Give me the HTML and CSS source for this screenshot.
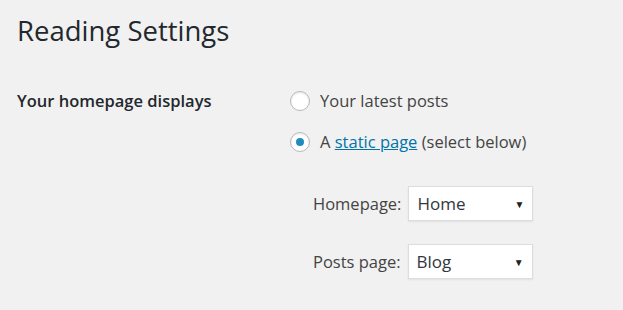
FILE: index.html
```html
<!DOCTYPE html>
<html lang="en">
<head>
    <meta charset="UTF-8">
    <title>Reading Settings</title>
    <link rel="stylesheet" href="styles.css">
</head>
<body>
    <div class="wrap">
        <h1>Reading Settings</h1>
        <div class="form-row">
            <div class="row-label">Your homepage displays</div>
            <div class="row-field">
                <label class="radio-line"><span class="radio"></span><span>Your latest posts</span></label>
                <label class="radio-line"><span class="radio checked"></span><span>A <a href="#">static page</a> (select below)</span></label>
                <div class="page-select">
                    <label class="select-line"><span>Homepage:</span><span class="select">Home<span class="arrow">&#9660;</span></span></label>
                    <label class="select-line"><span>Posts page:</span><span class="select">Blog<span class="arrow">&#9660;</span></span></label>
                </div>
            </div>
        </div>
    </div>
</body>
</html>
```

FILE: styles.css
```css
body {
    margin: 0;
    background-color: #f1f1f1;
    font-family: "Open Sans", sans-serif;
    color: #444;
}
.wrap {
    padding: 11px 17px;
}
h1 {
    margin: 0;
    font-size: 27.5px;
    font-weight: 400;
    color: #23282d;
    line-height: 40px;
}
.form-row {
    display: flex;
    margin-top: 38px;
}
.row-label {
    width: 273px;
    font-size: 16.5px;
    font-weight: 600;
    color: #23282d;
    line-height: 24px;
}
.row-field {
    display: flex;
    flex-direction: column;
    gap: 17px;
    font-size: 16.5px;
}
.radio-line {
    display: flex;
    align-items: center;
    gap: 10px;
    line-height: 24px;
}
.radio {
    width: 18px;
    height: 18px;
    border: 1px solid #b4b9be;
    border-radius: 50%;
    background-color: #fff;
    box-shadow: inset 0 1px 2px rgba(0, 0, 0, 0.1);
    display: flex;
    align-items: center;
    justify-content: center;
}
.radio.checked::before {
    content: "";
    width: 8px;
    height: 8px;
    border-radius: 50%;
    background-color: #1e8cbe;
}
a {
    color: #0073aa;
}
.page-select {
    display: flex;
    flex-direction: column;
    gap: 23px;
    padding-left: 23px;
    margin-top: 15px;
}
.select-line {
    display: flex;
    align-items: center;
    gap: 7px;
}
.select {
    width: 125px;
    height: 35px;
    box-sizing: border-box;
    border: 1px solid #ddd;
    background-color: #fff;
    color: #32373c;
    display: flex;
    align-items: center;
    justify-content: space-between;
    padding: 0 8px;
    font-size: 17px;
    box-shadow: 0 1px 2px rgba(0, 0, 0, 0.07);
}
.arrow {
    font-size: 10px;
    color: #222;
}
```
